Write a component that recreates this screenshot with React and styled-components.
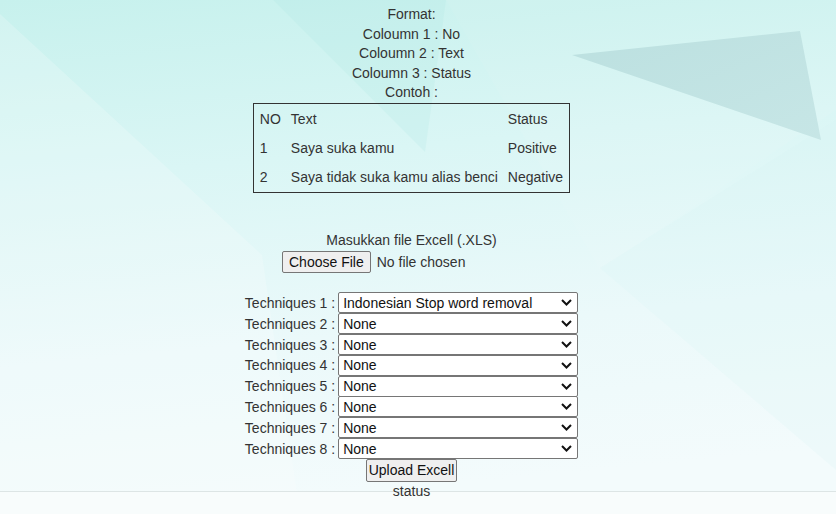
import React from 'react';
import styled, { createGlobalStyle } from 'styled-components';

const GlobalStyle = createGlobalStyle`
  html, body {
    margin: 0;
    padding: 0;
  }

  body {
    font-family: "Liberation Sans", Arial, sans-serif;
    font-size: 14px;
    color: #333;
    background: #f6fbfc;
  }
`;

const Page = styled.div`
  position: relative;
  width: 100%;
  min-height: 514px;
  overflow: hidden;
`;

const Backdrop = styled.svg`
  position: absolute;
  top: 0;
  left: 0;
  width: 836px;
  height: 514px;
  z-index: 0;
`;

const Content = styled.div`
  position: relative;
  z-index: 1;
  padding: 5px 13px 0 0;
  text-align: center;
`;

const Line = styled.div`
  line-height: 19.6px;
  margin-top: ${props => props.gap || 0}px;
`;

const Sample = styled.table`
  margin: 0 auto;
  border: 1px solid #333;
  border-collapse: separate;
  border-spacing: 2px 1px;
  text-align: left;
  color: #333;
  font-size: 14px;

  td {
    padding: 6px 4px;
    line-height: 16px;
    white-space: nowrap;
  }
`;

const FileInput = styled.input`
  display: block;
  width: 259px;
  margin: 0 auto;
  font-family: "Liberation Sans", Arial, sans-serif;
  font-size: 14px;
  color: #333;
  text-align: left;

  &::file-selector-button {
    font-family: "Liberation Sans", Arial, sans-serif;
    font-size: 14px;
    color: #111;
    height: 22px;
    padding: 0 6px;
    margin-right: 6px;
    background: #efefef;
    border: 1px solid #767676;
    border-radius: 2px;
  }
`;

const Techniques = styled.div`
  margin-top: 20px;
  display: flex;
  flex-direction: column;
  align-items: center;
`;

const TechRow = styled.div`
  display: flex;
  align-items: center;
  gap: 3px;
  height: 20.8px;
`;

const TechLabel = styled.label`
  line-height: 20px;
  color: #333;
`;

const SelectBox = styled.div`
  position: relative;
  width: 240px;
  height: 21px;
`;

const Select = styled.select`
  appearance: none;
  -webkit-appearance: none;
  width: 100%;
  height: 100%;
  box-sizing: border-box;
  margin: 0;
  padding: 0 20px 0 4px;
  font-family: "Liberation Sans", Arial, sans-serif;
  font-size: 14px;
  color: #111;
  background: #fff;
  border: 1px solid #767676;
  border-radius: 2px;
  outline: none;
`;

const Chevron = styled.svg`
  position: absolute;
  right: 6px;
  top: 7px;
  width: 11px;
  height: 7px;
  pointer-events: none;
`;

const UploadButton = styled.button`
  display: block;
  margin: 0 auto;
  height: 23px;
  padding: 0 2px;
  font-family: "Liberation Sans", Arial, sans-serif;
  font-size: 14px;
  color: #111;
  background: #efefef;
  border: 1px solid #767676;
  border-radius: 2px;
`;

const Status = styled.div`
  line-height: 18px;
  color: #333;
`;

const rows = [
  ['NO', 'Text', 'Status'],
  ['1', 'Saya suka kamu', 'Positive'],
  ['2', 'Saya tidak suka kamu alias benci', 'Negative'],
];

const techniques = [
  'Indonesian Stop word removal',
  'None',
  'None',
  'None',
  'None',
  'None',
  'None',
  'None',
];

function Background() {
  return (
    <Backdrop viewBox="0 0 836 514" preserveAspectRatio="none">
      <defs>
        <linearGradient id="sky" x1="0" y1="0" x2="0.15" y2="1">
          <stop offset="0" stopColor="#c7f1ed" />
          <stop offset="0.35" stopColor="#daf6f5" />
          <stop offset="0.7" stopColor="#ebf9fa" />
          <stop offset="1" stopColor="#f3fbfc" />
        </linearGradient>
        <linearGradient id="shard" x1="0" y1="0" x2="1" y2="1">
          <stop offset="0" stopColor="#b9dede" />
          <stop offset="1" stopColor="#c4e4e4" />
        </linearGradient>
      </defs>
      <rect x="0" y="0" width="836" height="514" fill="url(#sky)" />
      <polygon points="0,14 262,255 300,514 0,514" fill="#ffffff" opacity="0.2" />
      <polygon points="273,0 446,0 425,152" fill="#a9e4e0" opacity="0.2" />
      <polygon points="446,0 836,0 836,110 600,270" fill="#ffffff" opacity="0.06" />
      <polygon points="600,268 836,120 836,470" fill="#d6f3f3" opacity="0.2" />
      <polygon points="572,55 800,31 821,140" fill="url(#shard)" opacity="0.9" />
      <rect x="0" y="492" width="836" height="22" fill="#f8fcfc" />
      <line x1="0" y1="491.5" x2="836" y2="491.5" stroke="#dde5e5" strokeWidth="1" />
    </Backdrop>
  );
}

export default function App() {
  return (
    <>
      <GlobalStyle />
      <Page>
        <Background />
        <Content>
          <Line>Format:</Line>
          <Line>Coloumn 1 : No</Line>
          <Line>Coloumn 2 : Text</Line>
          <Line>Coloumn 3 : Status</Line>
          <Line>Contoh :</Line>
          <Sample>
            <tbody>
              {rows.map(row => (
                <tr key={row[0]}>
                  {row.map(cell => <td key={cell}>{cell}</td>)}
                </tr>
              ))}
            </tbody>
          </Sample>

          <Line gap={38}>Masukkan file Excell (.XLS)</Line>
          <FileInput type="file" />

          <Techniques>
            {techniques.map((value, i) => (
              <TechRow key={i}>
                <TechLabel>Techniques {i + 1} :</TechLabel>
                <SelectBox>
                  <Select defaultValue={value}>
                    <option>None</option>
                    <option>Indonesian Stop word removal</option>
                  </Select>
                  <Chevron viewBox="0 0 11 7">
                    <path d="M1 1l4.5 4.5L10 1" fill="none" stroke="#111" strokeWidth="2" />
                  </Chevron>
                </SelectBox>
              </TechRow>
            ))}
          </Techniques>

          <UploadButton>Upload Excell</UploadButton>
          <Status>status</Status>
        </Content>
      </Page>
    </>
  );
}
